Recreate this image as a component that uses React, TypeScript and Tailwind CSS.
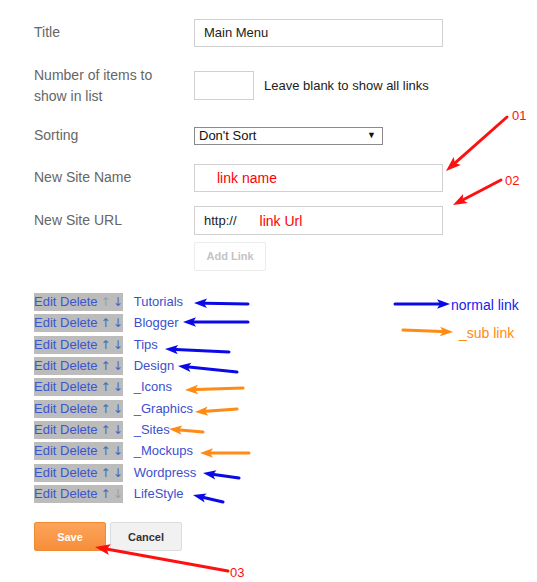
import type { ReactNode } from 'react'

type Arrow = { x1: number; y1: number; x2: number; y2: number; color: string; w?: number; head?: number }

const links = [
  { name: 'Tutorials', upOff: true },
  { name: 'Blogger' },
  { name: 'Tips' },
  { name: 'Design' },
  { name: '_Icons' },
  { name: '_Graphics' },
  { name: '_Sites' },
  { name: '_Mockups' },
  { name: 'Wordpress' },
  { name: 'LifeStyle', downOff: true },
]

const BLUE = '#0a0ae6'
const ORANGE = '#ff8a14'
const RED = '#ff1010'

// hand drawn annotation arrows: tail -> head
const arrows: Arrow[] = [
  { x1: 507, y1: 117, x2: 446, y2: 171, color: RED, w: 3, head: 15 },
  { x1: 501, y1: 180, x2: 453, y2: 205, color: RED, w: 3, head: 14 },
  { x1: 228, y1: 571, x2: 95, y2: 547, color: RED, w: 3, head: 15 },
  { x1: 248, y1: 304, x2: 194, y2: 303, color: BLUE },
  { x1: 248, y1: 322, x2: 183, y2: 322, color: BLUE },
  { x1: 229, y1: 352, x2: 165, y2: 349, color: BLUE },
  { x1: 237, y1: 372, x2: 178, y2: 366, color: BLUE },
  { x1: 243, y1: 388, x2: 185, y2: 390, color: ORANGE },
  { x1: 237, y1: 409, x2: 195, y2: 412, color: ORANGE },
  { x1: 203, y1: 432, x2: 169, y2: 429, color: ORANGE },
  { x1: 249, y1: 453, x2: 200, y2: 453, color: ORANGE },
  { x1: 239, y1: 478, x2: 203, y2: 473, color: BLUE },
  { x1: 223, y1: 502, x2: 193, y2: 495, color: BLUE },
  { x1: 395, y1: 304, x2: 450, y2: 304, color: BLUE },
  { x1: 403, y1: 330, x2: 453, y2: 332, color: ORANGE },
]

function ArrowShape({ x1, y1, x2, y2, color, w = 3, head = 13 }: Arrow) {
  const dx = x2 - x1
  const dy = y2 - y1
  const len = Math.hypot(dx, dy)
  const ux = dx / len
  const uy = dy / len
  const bx = x2 - ux * head
  const by = y2 - uy * head
  const hw = head * 0.36
  const pts = `${x2},${y2} ${bx - uy * hw},${by + ux * hw} ${bx + ux * 3},${by + uy * 3} ${bx + uy * hw},${by - ux * hw}`
  return (
    <g>
      <line x1={x1} y1={y1} x2={bx + ux * 2} y2={by + uy * 2} stroke={color} strokeWidth={w} strokeLinecap="round" />
      <polygon points={pts} fill={color} />
    </g>
  )
}

function Row({ label, children, className = '' }: { label: ReactNode; children: ReactNode; className?: string }) {
  return (
    <div className={`flex items-center ${className}`}>
      <div className="w-[160px] shrink-0 text-[14px] leading-[21.5px] text-[#666]">{label}</div>
      {children}
    </div>
  )
}

export default function App() {
  return (
    <div className="relative w-[537px] h-[582px] overflow-hidden bg-white font-['Liberation_Sans',Arial,sans-serif]">
      <div className="flex flex-col px-[34px]">
        <Row label="Title" className="mt-[19px] h-[28px]">
          <div className="flex h-[28px] w-[249px] items-center border border-[#d0d0d0] pl-[9px] text-[13px] text-[#222]">
            Main Menu
          </div>
        </Row>

        <Row
          label={
            <>
              Number of items to
              <br />
              show in list
            </>
          }
          className="mt-[17px] h-[44px]"
        >
          <div className="mt-[-1px] h-[29px] w-[60px] border border-[#d0d0d0]" />
          <span className="ml-[10px] text-[13px] text-[#222]">Leave blank to show all links</span>
        </Row>

        <Row label="Sorting" className="mt-[19px] h-[18px]">
          <div className="flex h-[18px] w-[189px] items-center justify-between border border-[#8a8a8a] pl-[4px] pr-[6px] text-[13px] text-[#111]">
            <span>Don't Sort</span>
            <span className="text-[9px]">▼</span>
          </div>
        </Row>

        <Row label="New Site Name" className="mt-[19px] h-[28px]">
          <div className="flex h-[28px] w-[249px] items-center border border-[#d0d0d0] pl-[22px] text-[14px] text-[#ff0000]">
            link name
          </div>
        </Row>

        <Row label="New Site URL" className="mt-[14px] h-[29px]">
          <div className="flex h-[29px] w-[249px] items-center border border-[#d0d0d0] pl-[9px] text-[13px] text-[#222]">
            <span>http://</span>
            <span className="ml-[23px] mt-[2px] text-[14px] text-[#ff0000]">link Url</span>
          </div>
        </Row>

        <div className="ml-[160px] mt-[7px] flex h-[29px] w-[72px] items-center justify-center rounded-[2px] border border-[#ececec] text-[11px] font-bold text-[#c4c4c4]">
          Add Link
        </div>

        <div className="mt-[22px] flex flex-col">
          {links.map((l) => (
            <div key={l.name} className="flex h-[21.33px] items-start text-[13px] leading-[18px]">
              <span className="flex h-[18px] shrink-0 items-center whitespace-nowrap bg-[#bcbcbc] text-[#3a57d0]">
                <span>Edit Delete</span>
                <span
                  className={`ml-[3px] font-['DejaVu_Sans',sans-serif] text-[12px] ${l.upOff ? 'text-[#97a0a8]' : 'text-[#4a62c8]'}`}
                >
                  ↑
                </span>
                <span
                  className={`ml-[2px] font-['DejaVu_Sans',sans-serif] text-[12px] ${l.downOff ? 'text-[#97a0a8]' : 'text-[#4a62c8]'}`}
                >
                  ↓
                </span>
              </span>
              <span className="ml-[11px] whitespace-nowrap text-[#3d4fd0]">{l.name}</span>
            </div>
          ))}
        </div>

        <div className="mt-[16px] flex gap-[4px]">
          <button
            type="button"
            className="h-[29px] w-[72px] rounded-[2px] border border-[#f08a30] bg-gradient-to-b from-[#fca45a] to-[#f68e39] text-[11px] font-bold text-white"
          >
            Save
          </button>
          <button
            type="button"
            className="h-[29px] w-[72px] rounded-[2px] border border-[#dcdcdc] bg-[#f1f1f1] text-[11px] font-bold text-[#333]"
          >
            Cancel
          </button>
        </div>
      </div>

      {/* annotations */}
      <svg className="pointer-events-none absolute left-0 top-0" width={537} height={582}>
        {arrows.map((a, i) => (
          <ArrowShape key={i} {...a} />
        ))}
      </svg>
      <span className="absolute left-[512px] top-[106px] text-[13px] text-[#ff1010]">01</span>
      <span className="absolute left-[505px] top-[171px] text-[13px] text-[#ff1010]">02</span>
      <span className="absolute left-[230px] top-[563px] text-[13px] text-[#ff1010]">03</span>
      <span className="absolute left-[451px] top-[295px] text-[14px] text-[#2020ee]">normal link</span>
      <span className="absolute left-[459px] top-[323px] text-[14px] text-[#ff8a14]">_sub link</span>
    </div>
  )
}
